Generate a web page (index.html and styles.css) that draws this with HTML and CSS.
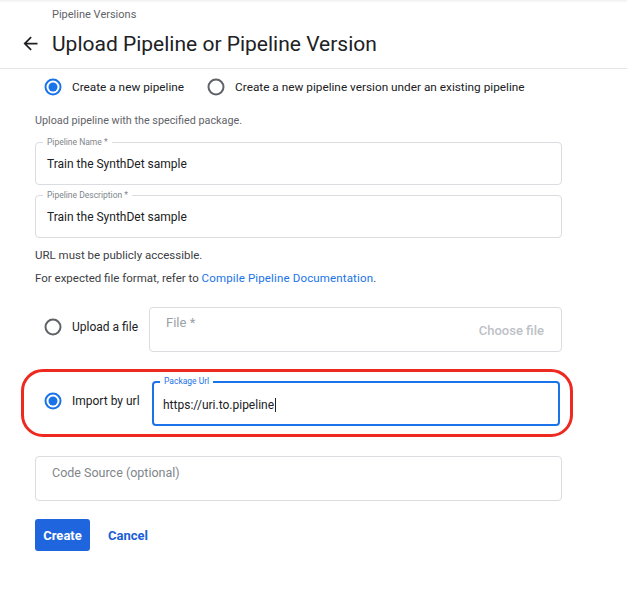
FILE: index.html
```html
<!DOCTYPE html>
<html lang="en">
<head>
<meta charset="utf-8">
<title>Upload Pipeline or Pipeline Version</title>
<link rel="stylesheet" href="styles.css">
</head>
<body>
<header class="page-header">
  <div class="crumbs">Pipeline Versions</div>
  <div class="titlebar">
    <svg class="back" viewBox="0 0 24 24" width="21" height="21"><path d="M20 11H7.83l5.59-5.59L12 4l-8 8 8 8 1.41-1.41L7.83 13H20v-2z" fill="#202124"/></svg>
    <h1 class="title">Upload Pipeline or Pipeline Version</h1>
  </div>
</header>
<main class="content">
  <div class="mode-row">
    <label class="opt">
      <svg class="radio" viewBox="0 0 18 18" width="18" height="18"><circle cx="9" cy="9" r="7.5" fill="none" stroke="#1a73e8" stroke-width="2"/><circle cx="9" cy="9" r="4.5" fill="#1a73e8"/></svg>
      <span>Create a new pipeline</span>
    </label>
    <label class="opt">
      <svg class="radio" viewBox="0 0 18 18" width="18" height="18"><circle cx="9" cy="9" r="7.5" fill="none" stroke="#5f6368" stroke-width="2"/></svg>
      <span>Create a new pipeline version under an existing pipeline</span>
    </label>
  </div>

  <p class="hint first">Upload pipeline with the specified package.</p>

  <div class="field">
    <span class="float-label">Pipeline Name *</span>
    <span class="value">Train the SynthDet sample</span>
  </div>
  <div class="field second">
    <span class="float-label">Pipeline Description *</span>
    <span class="value">Train the SynthDet sample</span>
  </div>

  <p class="note">URL must be publicly accessible.</p>
  <p class="note next">For expected file format, refer to <a class="link" href="#">Compile Pipeline Documentation</a>.</p>

  <div class="source-row upload">
    <label class="opt source-opt">
      <svg class="radio" viewBox="0 0 18 18" width="18" height="18"><circle cx="9" cy="9" r="7.5" fill="none" stroke="#5f6368" stroke-width="2"/></svg>
      <span>Upload a file</span>
    </label>
    <div class="file-box">
      <span class="file-label">File *</span>
      <span class="choose">Choose file</span>
    </div>
  </div>

  <div class="source-row import">
    <label class="opt source-opt wide">
      <svg class="radio" viewBox="0 0 18 18" width="18" height="18"><circle cx="9" cy="9" r="7.5" fill="none" stroke="#1a73e8" stroke-width="2"/><circle cx="9" cy="9" r="4.5" fill="#1a73e8"/></svg>
      <span>Import by url</span>
    </label>
    <div class="url-box">
      <span class="float-label focused">Package Url</span>
      <span class="value">https://uri.to.pipeline<span class="caret"></span></span>
    </div>
  </div>

  <div class="code-box">
    <span class="placeholder">Code Source (optional)</span>
  </div>

  <div class="actions">
    <button class="btn-primary" type="button">Create</button>
    <button class="btn-text" type="button">Cancel</button>
  </div>
</main>
</body>
</html>
```

FILE: styles.css
```css
* { box-sizing: border-box; }

body {
  margin: 0;
  background: #ffffff;
  font-family: Roboto, "Noto Sans", Arial, sans-serif;
  color: #202124;
}

.page-header {
  box-shadow: inset 0 3px 3px -2px rgba(0, 0, 0, 0.08);
}

.crumbs {
  padding: 8px 0 0 52px;
  font-size: 11px;
  line-height: 13px;
  color: #5f6368;
}

.titlebar {
  display: flex;
  align-items: center;
  height: 48px;
  border-bottom: 1px solid #e6e6e6;
  padding-left: 20px;
  padding-bottom: 2px;
}

.back { flex: none; }

.title {
  margin: 0 0 0 11px;
  font-size: 21px;
  font-weight: 400;
  color: #202124;
}

.content {
  padding: 0 65px 0 35px;
}

.mode-row {
  display: flex;
  align-items: center;
  gap: 23px;
  margin-top: 9px;
  padding-left: 9px;
  height: 18px;
}

.opt {
  display: inline-flex;
  align-items: center;
  gap: 10px;
  font-size: 11.8px;
  color: #202124;
}

.radio { flex: none; display: block; }

.hint, .note {
  margin: 0;
  line-height: 14px;
}

.hint { color: #5f6368; font-size: 10.8px; }
.hint.first { margin-top: 18px; }

.note { color: #3c4043; margin-top: 10px; font-size: 11.5px; }
.note.next { margin-top: 9px; }

.link { color: #1a73e8; text-decoration: none; letter-spacing: 0.15px; }

.field {
  position: relative;
  height: 43px;
  border: 1px solid #dadce0;
  border-radius: 4px;
  margin-top: 14px;
  display: flex;
  align-items: center;
  padding-left: 11px;
}

.field.second { margin-top: 10px; }

.value {
  font-size: 12px;
  color: #202124;
}

.float-label {
  position: absolute;
  top: -6px;
  left: 7px;
  padding: 0 4px;
  background: #ffffff;
  font-size: 8.5px;
  line-height: 10px;
  color: #80868b;
}

.float-label.focused { color: #1a73e8; left: 6px; top: -7px; }

.source-row {
  display: flex;
  align-items: center;
}

.source-row.upload {
  margin-top: 22px;
  padding-left: 9px;
  align-items: flex-start;
}

.source-row.upload .source-opt { margin-top: 11px; }

.source-opt { width: 105px; flex: none; font-size: 12px; }
.source-opt.wide { width: 108px; }

.file-box {
  position: relative;
  flex: 1;
  height: 45px;
  border: 1px solid #dadce0;
  border-radius: 4px;
  display: flex;
  align-items: center;
  justify-content: flex-end;
  padding-right: 17px;
}

.file-label {
  position: absolute;
  left: 16px;
  top: 7px;
  font-size: 13px;
  color: #9aa0a6;
}

.choose {
  font-size: 13px;
  font-weight: 500;
  color: #bdc1c6;
  margin-top: 1px;
}

.source-row.import {
  margin: 17px -11px 0 -14px;
  border: 3px solid #ee2a20;
  border-radius: 22px;
  padding: 9px 10px 8px 20px;
}

.source-row.import .source-opt { margin-top: -6px; }

.url-box {
  position: relative;
  flex: 1;
  height: 45px;
  border: 2px solid #1a73e8;
  border-radius: 4px;
  display: flex;
  align-items: center;
  padding-left: 9px;
}

.url-box .value { margin-top: 2px; }

.caret {
  display: inline-block;
  width: 1px;
  height: 14px;
  background: #202124;
  vertical-align: -3px;
  margin-left: 1px;
}

.code-box {
  position: relative;
  height: 45px;
  border: 1px solid #dadce0;
  border-radius: 4px;
  margin-top: 19px;
}

.placeholder {
  position: absolute;
  left: 16px;
  top: 8px;
  font-size: 12.5px;
  color: #80868b;
}

.actions {
  display: flex;
  align-items: center;
  gap: 18px;
  margin-top: 18px;
}

.btn-primary {
  width: 55px;
  height: 32px;
  border: none;
  border-radius: 3px;
  background: #1f66de;
  color: #ffffff;
  font-family: inherit;
  font-size: 13px;
  font-weight: 700;
  padding: 0;
}

.btn-text {
  border: none;
  background: none;
  padding: 0;
  font-family: inherit;
  font-size: 13px;
  font-weight: 700;
  color: #1a5fd6;
}
```
